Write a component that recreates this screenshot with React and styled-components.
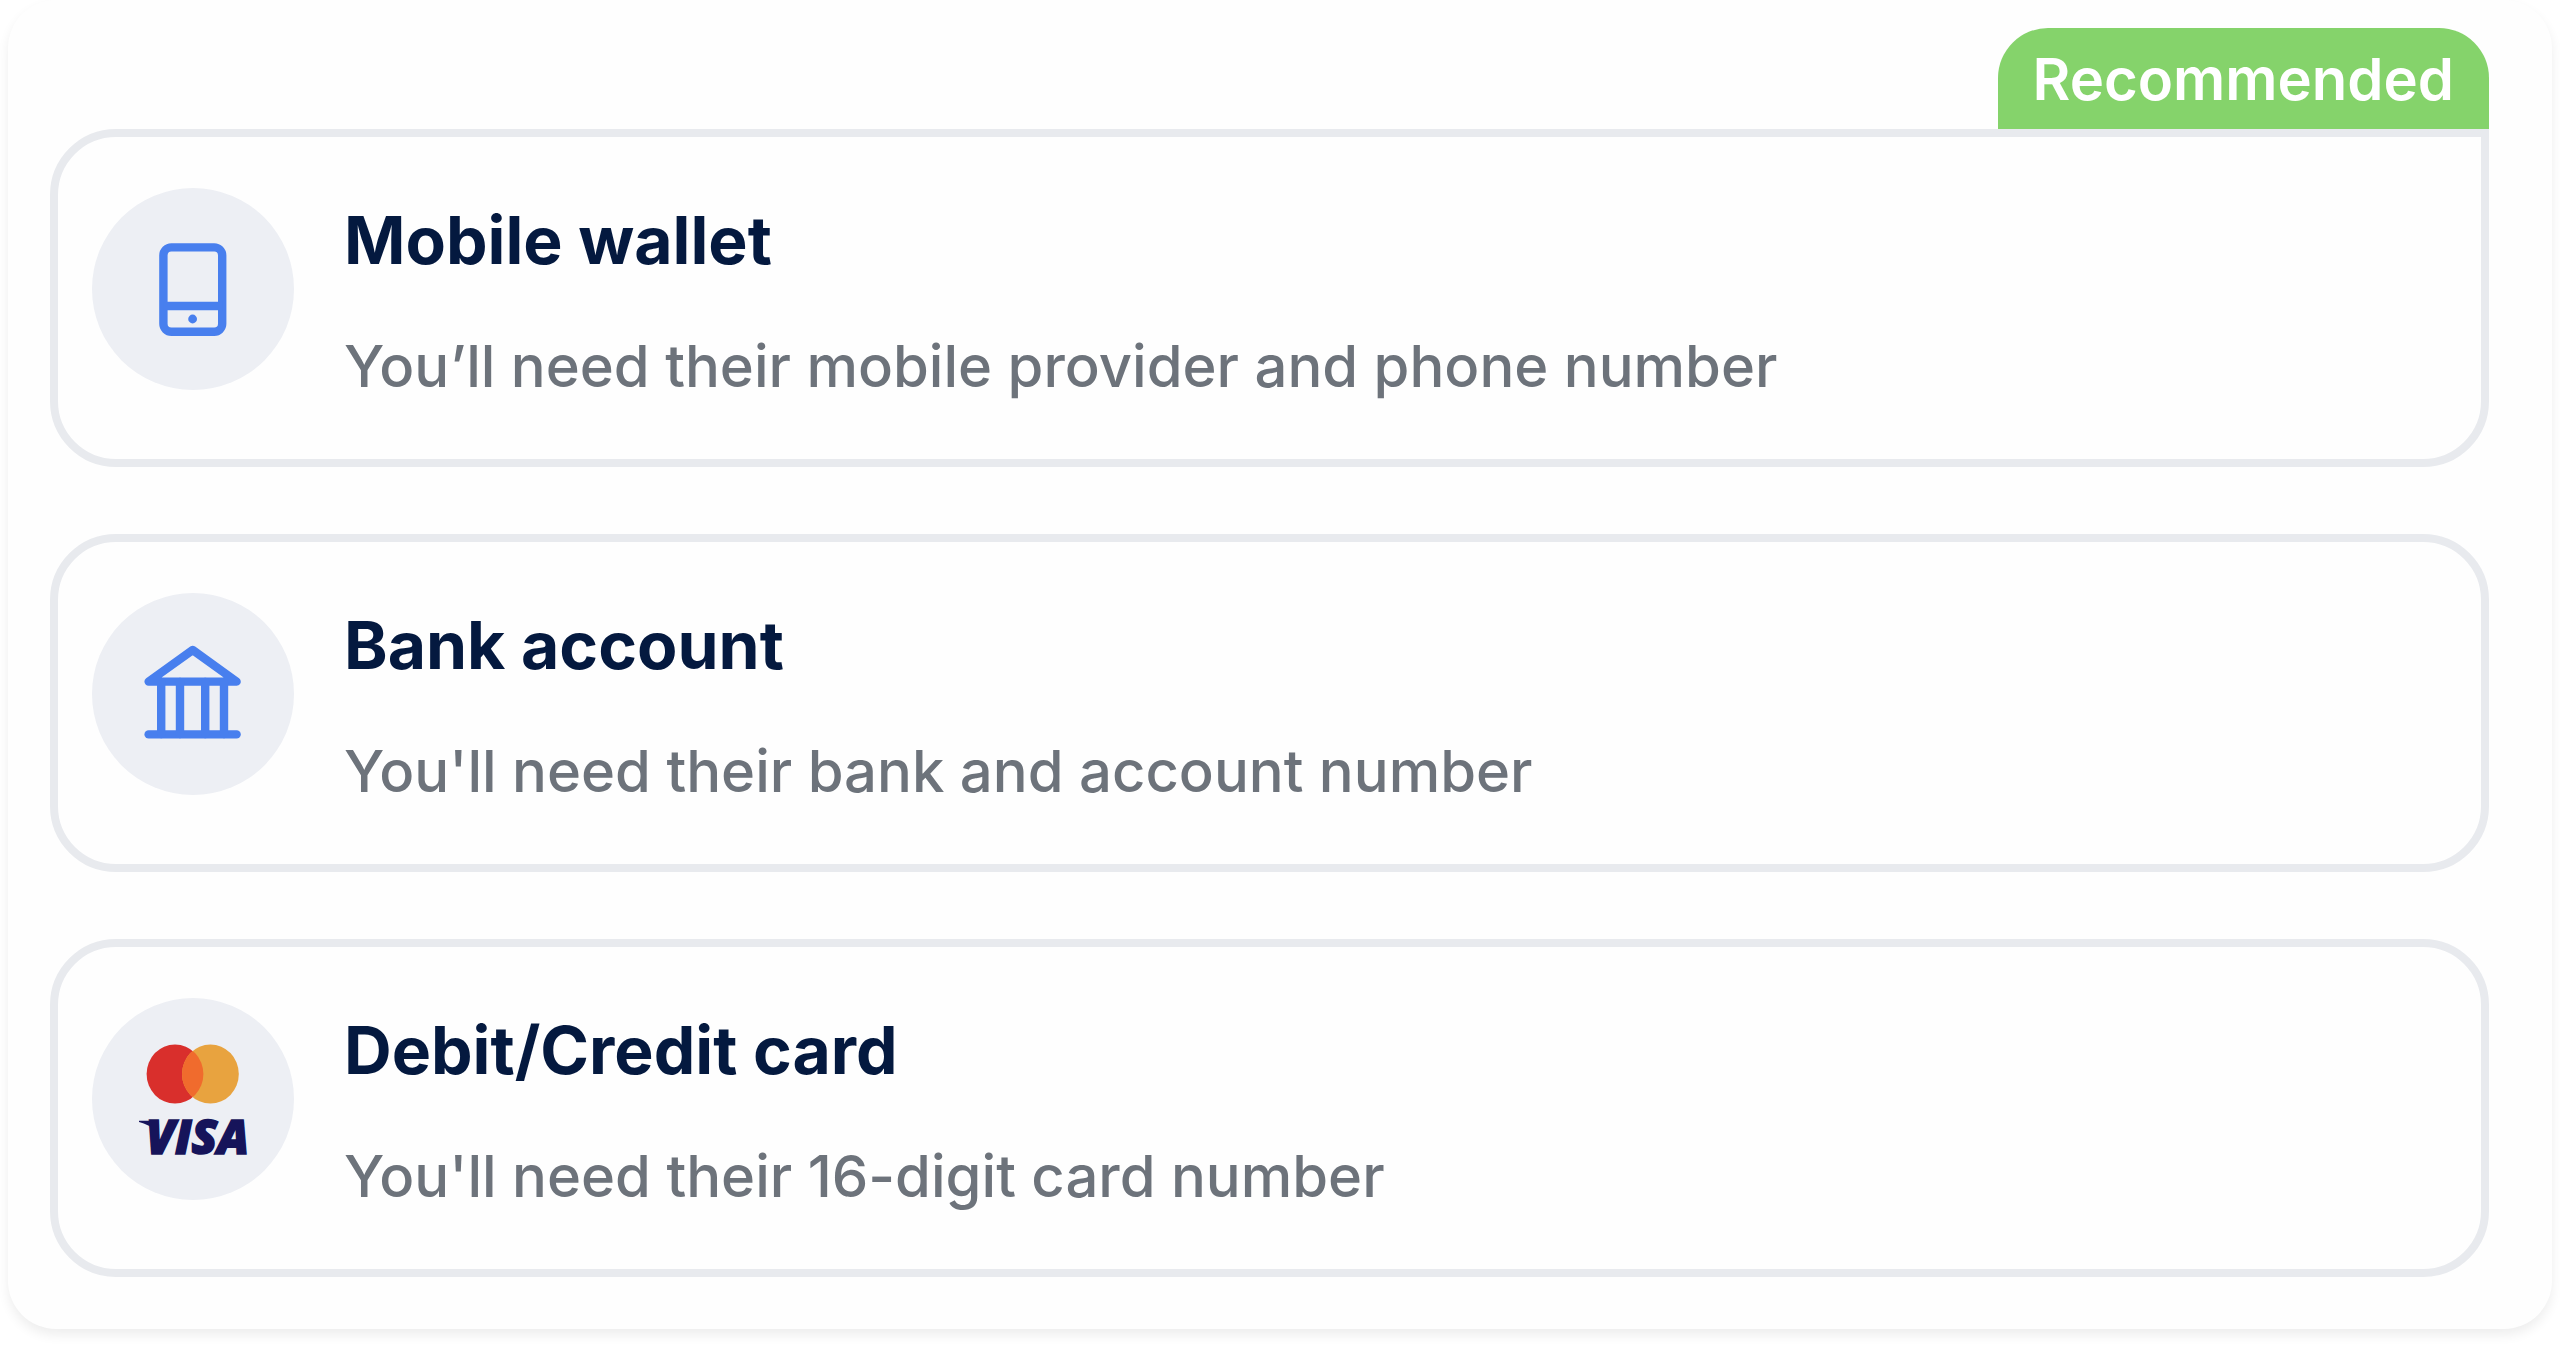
import React from "react";
import styled, { createGlobalStyle } from "styled-components";

const GlobalStyle = createGlobalStyle`
  *, *::before, *::after { box-sizing: border-box; }
  body {
    margin: 0;
    background: #ffffff;
    font-family: Inter, "Liberation Sans", sans-serif;
  }
`;

const Page = styled.div`
  min-height: 100vh;
  padding: 0 8px 16px;
`;

const Panel = styled.main`
  padding: 28px 63px 52px 42px;
  background: #fefefe;
  border-radius: 48px;
  box-shadow: 0 6px 12px rgba(0, 0, 0, 0.07);
`;

const MethodList = styled.ul`
  display: flex;
  flex-direction: column;
  gap: 67px;
  margin: 0;
  padding: 0;
  list-style: none;
`;

const MethodItem = styled.li`
  display: flex;
  flex-direction: column;
`;

const Badge = styled.span`
  align-self: flex-end;
  height: 101px;
  padding: 0 35px;
  border-radius: 50px 50px 0 0;
  background: #85d36b;
  color: #ffffff;
  font-size: 58px;
  font-weight: 600;
  line-height: 102px;
`;

const MethodCard = styled.button`
  display: flex;
  align-items: flex-start;
  gap: 50px;
  width: 100%;
  padding: 51px 34px 49px;
  border: 8px solid #e8eaee;
  border-radius: ${({ $tagged }) => ($tagged ? "66px 0 66px 66px" : "66px")};
  background: #fefefe;
  font: inherit;
  text-align: left;
  cursor: pointer;
`;

const IconCircle = styled.span`
  display: flex;
  flex: none;
  width: 202px;
  height: 202px;
  border-radius: 50%;
  background: #edeff4;
`;

const MethodText = styled.span`
  display: flex;
  flex-direction: column;
  gap: 38px;
  padding-top: 8px;
`;

const Title = styled.span`
  color: #04193f;
  font-size: 66px;
  font-weight: 700;
  line-height: 88px;
`;

const Description = styled.span`
  color: #6d737b;
  font-size: 58px;
  font-weight: 500;
  line-height: 88px;
`;

function PhoneIcon() {
  return (
    <svg viewBox="0 0 202 202" width="202" height="202" fill="none" stroke="#487fee" strokeWidth="8.4" aria-hidden="true">
      <rect x="71.4" y="59.4" width="58.8" height="84.4" rx="8" />
      <path d="M71.4 118H130.2" />
      <circle cx="100.6" cy="131" r="4.4" fill="#487fee" stroke="none" />
    </svg>
  );
}

function BankIcon() {
  return (
    <svg viewBox="0 0 202 202" width="202" height="202" fill="none" stroke="#487fee" strokeWidth="8.4" strokeLinecap="round" strokeLinejoin="round" aria-hidden="true">
      <path d="M56.6 88.6L100.7 57L144.6 88.6Z" />
      <path d="M56.6 141.4H144.6" />
      <path d="M69.2 89V141M88 89V141M113.2 89V141M132 89V141" />
    </svg>
  );
}

function CardBrandsIcon() {
  return (
    <svg viewBox="0 0 202 202" width="202" height="202" aria-hidden="true">
      <defs>
        <clipPath id="left-disc">
          <ellipse cx="83" cy="76" rx="28.4" ry="29.6" />
        </clipPath>
      </defs>
      <ellipse cx="83" cy="76" rx="28.4" ry="29.6" fill="#d92f2c" />
      <ellipse cx="118.4" cy="76" rx="28.4" ry="29.6" fill="#e8a33f" />
      <ellipse cx="118.4" cy="76" rx="28.4" ry="29.6" fill="#f06b2d" clipPath="url(#left-disc)" />
      <path d="M47 122.8H62L64 134Q57 126 47 124Z" fill="#16145a" />
      <text x="54" y="156" fill="#16145a" stroke="#16145a" strokeWidth="1.6" fontFamily='"Open Sans", sans-serif' fontSize="47" fontWeight="800" fontStyle="italic">
        VISA
      </text>
    </svg>
  );
}

const methods = [
  {
    title: "Mobile wallet",
    description: "You’ll need their mobile provider and phone number",
    Icon: PhoneIcon,
    badge: "Recommended",
  },
  {
    title: "Bank account",
    description: "You'll need their bank and account number",
    Icon: BankIcon,
  },
  {
    title: "Debit/Credit card",
    description: "You'll need their 16-digit card number",
    Icon: CardBrandsIcon,
  },
];

export default function App() {
  return (
    <>
      <GlobalStyle />
      <Page>
        <Panel>
          <MethodList>
            {methods.map(({ title, description, Icon, badge }) => (
              <MethodItem key={title}>
                {badge && <Badge>{badge}</Badge>}
                <MethodCard type="button" $tagged={Boolean(badge)}>
                  <IconCircle>
                    <Icon />
                  </IconCircle>
                  <MethodText>
                    <Title>{title}</Title>
                    <Description>{description}</Description>
                  </MethodText>
                </MethodCard>
              </MethodItem>
            ))}
          </MethodList>
        </Panel>
      </Page>
    </>
  );
}
